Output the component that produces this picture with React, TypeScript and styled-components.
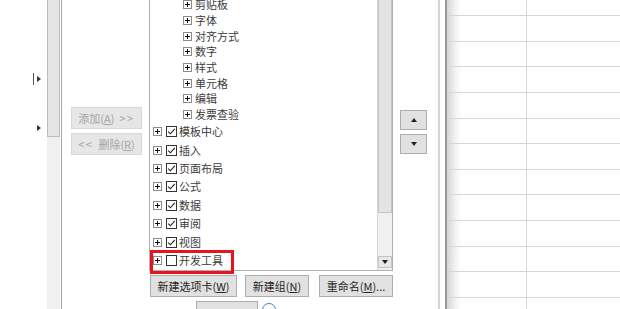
import React from "react";
import styled, { createGlobalStyle } from "styled-components";

const Global = createGlobalStyle`
	html, body {
		margin: 0;
		padding: 0;
		background: #ffffff;
	}
`;

const subItems = ["剪贴板", "字体", "对齐方式", "数字", "样式", "单元格", "编辑", "发票查验"];

const tabs = [
	{ name: "模板中心", checked: true },
	{ name: "插入", checked: true },
	{ name: "页面布局", checked: true },
	{ name: "公式", checked: true },
	{ name: "数据", checked: true },
	{ name: "审阅", checked: true },
	{ name: "视图", checked: true },
	{ name: "开发工具", checked: false, marked: true },
];

const Page = styled.div`
	display: flex;
	width: 620px;
	height: 309px;
	overflow: hidden;
	background: #ffffff;
	font-family: "Noto Sans CJK SC", "Noto Sans", sans-serif;
	font-size: 11px;
	color: #3c3c3c;
`;

const Gutter = styled.div`
	flex: none;
	width: 47px;
	box-sizing: border-box;
	display: flex;
	flex-direction: column;
	align-items: flex-end;
	gap: 37px;
	padding: 73px 6px 0 0;
`;

const Marker = styled.div`
	display: flex;
	align-items: center;
	gap: 3px;
	height: 12px;
`;

const Bar = styled.span`
	width: 1px;
	height: 12px;
	background: #555555;
`;

const Arrow = styled.span<{ $dir: "right" | "up" | "down" }>`
	width: 0;
	height: 0;
	border-style: solid;
	border-color: transparent;
	${ ({ $dir }) => $dir === "right" && `
		border-width: 3.5px 0 3.5px 4px;
		border-left-color: #333333;
	` }
	${ ({ $dir }) => $dir === "up" && `
		border-width: 0 3.5px 4px 3.5px;
		border-bottom-color: #222222;
	` }
	${ ({ $dir }) => $dir === "down" && `
		border-width: 4px 3.5px 0 3.5px;
		border-top-color: #222222;
	` }
`;

const Strip = styled.div`
	flex: none;
	width: 13px;
	display: flex;
	flex-direction: column;
	background: #f0f0f0;
	border-right: 1px solid #ffffff;
	box-shadow: 1px 0 0 #a6a6a6;
	margin-right: 2px;
`;

const Thumb = styled.div<{ $height: number }>`
	flex: none;
	height: ${ ({ $height }) => $height }px;
	box-sizing: border-box;
	background: #e4e4e4;
	border: 1px solid #bcbcbc;
	border-top: none;
`;

const AddPane = styled.div`
	flex: none;
	width: 86px;
	box-sizing: border-box;
	display: flex;
	flex-direction: column;
	gap: 4px;
	padding: 107px 0 0 8px;
`;

const DimButton = styled.div`
	width: 71px;
	height: 22px;
	box-sizing: border-box;
	display: flex;
	align-items: center;
	justify-content: center;
	gap: 5px;
	background: #e6e6e6;
	border: 1px solid #d8d8d8;
	color: #a3a3a3;
`;

const Chevrons = styled.span`
	letter-spacing: 1.5px;
`;

const U = styled.span`
	text-decoration: underline;
	text-underline-offset: 1px;
`;

const TreeColumn = styled.div`
	flex: none;
	width: 244px;
	display: flex;
	flex-direction: column;
`;

const TreeBox = styled.div`
	flex: none;
	height: 271px;
	box-sizing: border-box;
	display: flex;
	border: 1px solid #b0b0b0;
	border-top: none;
`;

const List = styled.div`
	flex: 1;
	margin-top: -3px;
`;

const SubRow = styled.div`
	height: 15.7px;
	display: flex;
	align-items: center;
	gap: 3px;
	padding-left: 33px;
`;

const TabRow = styled.div`
	position: relative;
	height: 18.4px;
	display: flex;
	align-items: center;
	padding-left: 3px;
`;

const Label = styled.span`
	line-height: 1;
	white-space: nowrap;
`;

const Highlight = styled.div`
	position: absolute;
	left: 0;
	top: -1.5px;
	width: 84px;
	height: 24px;
	box-sizing: border-box;
	border: 3px solid #e8141b;
`;

const ScrollBar = styled.div`
	flex: none;
	width: 15px;
	display: flex;
	flex-direction: column;
	background: #f0f0f0;
	border-left: 1px solid #d8d8d8;
	box-sizing: border-box;
`;

const ScrollThumb = styled.div`
	flex: none;
	height: 213px;
	box-sizing: border-box;
	background: #e3e3e3;
	border: 1px solid #c4c4c4;
	border-top: none;
`;

const ScrollButton = styled.div`
	margin-top: auto;
	margin-bottom: 2px;
	height: 12px;
	box-sizing: border-box;
	display: flex;
	align-items: center;
	justify-content: center;
	background: #e8e8e8;
	border: 1px solid #c4c4c4;
`;

const ButtonRow = styled.div`
	display: flex;
	gap: 8px;
	padding: 4px 0 0 1px;
`;

const Button = styled.div<{ $width: number }>`
	flex: none;
	width: ${ ({ $width }) => $width }px;
	height: 22px;
	box-sizing: border-box;
	display: flex;
	align-items: center;
	justify-content: center;
	background: #e1e1e1;
	border: 1px solid #adadad;
	color: #262626;
	white-space: nowrap;
	&:last-child {
		margin-left: 2px;
	}
`;

const FooterRow = styled.div`
	display: flex;
	align-items: flex-start;
	gap: 4px;
	padding: 4px 0 0 47px;
`;

const Stub = styled.div`
	width: 62px;
	height: 10px;
	box-sizing: border-box;
	background: #e1e1e1;
	border: 1px solid #adadad;
	border-bottom: none;
`;

const Info = styled.div`
	margin-top: 2px;
	width: 14px;
	height: 14px;
	box-sizing: border-box;
	border: 1.5px solid #3a80d2;
	border-radius: 50%;
`;

const OrderPane = styled.div`
	flex: none;
	width: 45px;
	box-sizing: border-box;
	display: flex;
	flex-direction: column;
	gap: 4px;
	padding: 110px 0 0 7px;
`;

const MoveButton = styled.div`
	width: 27px;
	height: 20px;
	box-sizing: border-box;
	display: flex;
	align-items: center;
	justify-content: center;
	background: #e1e1e1;
	border: 1px solid #adadad;
`;

const Divider = styled.div`
	flex: none;
	width: 7px;
	box-sizing: border-box;
	border-left: 2px solid #d4d4d4;
`;

const Sheet = styled.div`
	flex: 1;
	display: flex;
	flex-direction: column;
	border-left: 2px solid #979797;
	background: linear-gradient(to right, #d6d6d6, #f4f4f4 9px, #ffffff 15px);
`;

const SheetRow = styled.div<{ $height: number }>`
	flex: none;
	display: flex;
	height: ${ ({ $height }) => $height }px;
	box-sizing: border-box;
	border-bottom: 1px solid #d6d6d6;
`;

const Cell = styled.div`
	flex: none;
	width: 80px;
	box-sizing: border-box;
	border-right: 1px solid #d6d6d6;
`;

const Expander = () => (
	<svg width="9" height="9" viewBox="0 0 9 9" style={ { flex: "none" } }>
		<rect x="0.5" y="0.5" width="8" height="8" fill="#ffffff" stroke="#8c8c8c" />
		<path d="M2 4.5h5M4.5 2v5" stroke="#111111" strokeWidth="1" />
	</svg>
);

const CheckBox = ({ checked }: { checked: boolean }) => (
	<svg width="11" height="11" viewBox="0 0 11 11" style={ { flex: "none", margin: "0 2px 0 4px" } }>
		<rect x="0.5" y="0.5" width="10" height="10" fill="#ffffff" stroke="#333333" />
		{ checked && (
			<path d="M2.2 5.6 L4.4 7.8 L8.8 2.8" fill="none" stroke="#222222" strokeWidth="1.1" />
		) }
	</svg>
);

const sheetRows = [16, ...Array.from({ length: 12 }, () => 25.64)];

export default function App() {
	return (
		<>
			<Global />
			<Page>
				<Gutter>
					<Marker>
						<Bar />
						<Arrow $dir="right" />
					</Marker>
					<Marker>
						<Arrow $dir="right" />
					</Marker>
				</Gutter>
				<Strip>
					<Thumb $height={ 137 } />
				</Strip>
				<AddPane>
					<DimButton>
						<span>{ "添加(" }<U>{ "A" }</U>{ ")" }</span>
						<Chevrons>{ ">>" }</Chevrons>
					</DimButton>
					<DimButton>
						<Chevrons>{ "<<" }</Chevrons>
						<span>{ "删除(" }<U>{ "R" }</U>{ ")" }</span>
					</DimButton>
				</AddPane>
				<TreeColumn>
					<TreeBox>
						<List>
							{ subItems.map(item => (
								<SubRow key={ item }>
									<Expander />
									<Label>{ item }</Label>
								</SubRow>
							)) }
							{ tabs.map(tab => (
								<TabRow key={ tab.name }>
									<Expander />
									<CheckBox checked={ tab.checked } />
									<Label>{ tab.name }</Label>
									{ tab.marked && <Highlight /> }
								</TabRow>
							)) }
						</List>
						<ScrollBar>
							<ScrollThumb />
							<ScrollButton>
								<Arrow $dir="down" />
							</ScrollButton>
						</ScrollBar>
					</TreeBox>
					<ButtonRow>
						<Button $width={ 87 }>{ "新建选项卡(" }<U>{ "W" }</U>{ ")" }</Button>
						<Button $width={ 64 }>{ "新建组(" }<U>{ "N" }</U>{ ")" }</Button>
						<Button $width={ 74 }>{ "重命名(" }<U>{ "M" }</U>{ ")..." }</Button>
					</ButtonRow>
					<FooterRow>
						<Stub />
						<Info />
					</FooterRow>
				</TreeColumn>
				<OrderPane>
					<MoveButton>
						<Arrow $dir="up" />
					</MoveButton>
					<MoveButton>
						<Arrow $dir="down" />
					</MoveButton>
				</OrderPane>
				<Divider />
				<Sheet>
					{ sheetRows.map((height, i) => (
						<SheetRow key={ i } $height={ height }>
							<Cell />
						</SheetRow>
					)) }
				</Sheet>
			</Page>
		</>
	);
}
